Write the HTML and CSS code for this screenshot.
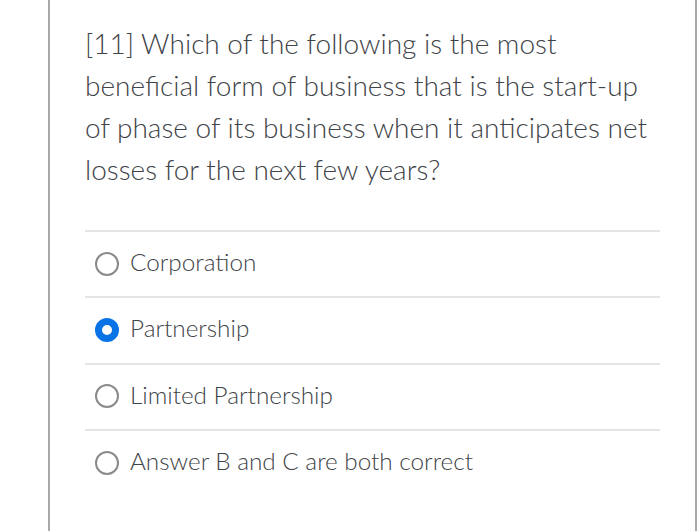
FILE: index.html
```html
<!DOCTYPE html>
<html>
<head>
<meta charset="utf-8">
<link rel="stylesheet" href="styles.css">
</head>
<body>
<div class="panel">
  <div class="question">[11] Which of the following is the most beneficial form of business that is the start-up of phase of its business when it anticipates net losses for the next few years?</div>
  <div class="answers">
    <div class="answer"><span class="radio"></span><span class="label">Corporation</span></div>
    <div class="answer"><span class="radio checked"></span><span class="label">Partnership</span></div>
    <div class="answer"><span class="radio"></span><span class="label">Limited Partnership</span></div>
    <div class="answer last"><span class="radio"></span><span class="label">Answer B and C are both correct</span></div>
  </div>
</div>
</body>
</html>
```
FILE: styles.css
```css
html, body {
  margin: 0;
  padding: 0;
  background: #ffffff;
}
body {
  font-family: Lato, "Open Sans", sans-serif;
  color: #3d4145;
}
.panel {
  margin-left: 48px;
  width: 649px;
  height: 531px;
  box-sizing: border-box;
  border-left: 2px solid #a9a9a9;
  border-right: 2px solid #a9a9a9;
  padding: 22px 0 0 35px;
  background: #fff;
}
.question {
  width: 572px;
  font-size: 28px;
  line-height: 42px;
  font-weight: 300;
  color: #404347;
}
.answers {
  margin-top: 40px;
  width: 575px;
}
.answer {
  display: flex;
  align-items: center;
  height: 66.3px;
  border-top: 2px solid #e4e4e4;
  box-sizing: border-box;
  padding-bottom: 1px;
}
.radio {
  width: 24px;
  height: 24px;
  box-sizing: border-box;
  border: 2.5px solid #8a8a8a;
  border-radius: 50%;
  margin-left: 10px;
  margin-right: 11px;
}
.radio.checked {
  border: 7.5px solid #0a74e6;
}
.label {
  font-size: 24.3px;
  font-weight: 300;
  color: #404347;
  margin-bottom: 4px;
}
```
